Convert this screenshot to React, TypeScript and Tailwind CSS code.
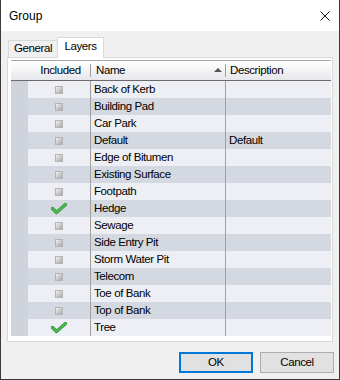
import React from "react";

const rows: { name: string; desc?: string; checked?: boolean }[] = [
  { name: "Back of Kerb" },
  { name: "Building Pad" },
  { name: "Car Park" },
  { name: "Default", desc: "Default" },
  { name: "Edge of Bitumen" },
  { name: "Existing Surface" },
  { name: "Footpath" },
  { name: "Hedge", checked: true },
  { name: "Sewage" },
  { name: "Side Entry Pit" },
  { name: "Storm Water Pit" },
  { name: "Telecom" },
  { name: "Toe of Bank" },
  { name: "Top of Bank" },
  { name: "Tree", checked: true },
];

function Check() {
  return (
    <svg width="16" height="12" viewBox="0 0 16 12">
      <path d="M1.5 5.5 L5.5 9.5 L14.5 1.5" fill="none" stroke="#2f8f35" strokeWidth="3.2" strokeLinecap="round" strokeLinejoin="round" />
      <path d="M1.5 5.5 L5.5 9.5 L14.5 1.5" fill="none" stroke="#4cbb4f" strokeWidth="1.8" strokeLinecap="round" strokeLinejoin="round" />
    </svg>
  );
}

function Box() {
  return <div className="w-[8px] h-[8px] border border-[#b4b4b4] bg-gradient-to-br from-[#f0f0f0] to-[#a9a9a9]" />;
}

export default function App() {
  return (
    <div className="w-[340px] h-[380px] bg-[#f0f0f0] border-x border-b border-[#3a3a3a] flex flex-col font-['Liberation_Sans',Arial,sans-serif] text-black">
      <div className="h-[31px] bg-white flex items-center justify-between pl-[8px] pr-[9px] shrink-0">
        <span className="text-[12px]">Group</span>
        <svg width="10" height="10" viewBox="0 0 10 10">
          <path d="M0.5 0.5 L9.5 9.5 M9.5 0.5 L0.5 9.5" stroke="#111" strokeWidth="1" />
        </svg>
      </div>
      <div className="flex flex-col px-[6px] pt-[6px] text-[11.5px] tracking-[-0.4px]">
        <div className="h-[20px] flex items-end pl-[1px]">
          <div className="w-[50px] h-[17px] border border-b-0 border-[#d9d9d9] flex items-center justify-center">General</div>
          <div className="w-[47px] h-[21px] -ml-[1px] -mb-[1px] relative z-10 bg-white border border-b-0 border-[#d9d9d9] flex items-center justify-center pb-[2px]">Layers</div>
        </div>
        <div className="h-[285px] border border-[#d9d9d9] bg-white pl-[3px] pr-[1px] pt-[2px]">
          <div className="flex flex-col">
            <div className="h-[21px] flex border-t border-[#a8a8a8] border-b border-b-[#6a6a6a] bg-gradient-to-b from-white to-[#e6e7eb]">
              <div className="w-[17px]" />
              <div className="w-[63px] flex items-center justify-center relative">
                <span className="pl-[2px]">Included</span>
                <div className="absolute right-0 top-[3px] bottom-[3px] w-px bg-[#a0a0a0]" />
              </div>
              <div className="w-[135px] flex items-center pl-[5px] relative">
                <span>Name</span>
                <svg className="absolute right-[4px] top-[7px]" width="8" height="4" viewBox="0 0 8 4">
                  <path d="M0 4 L4 0 L8 4 Z" fill="#555" />
                </svg>
                <div className="absolute right-0 top-[3px] bottom-[3px] w-px bg-[#a0a0a0]" />
              </div>
              <div className="flex-1 flex items-center pl-[4px]">Description</div>
            </div>
            {rows.map((r, i) => (
              <div key={r.name} className={`h-[17px] flex ${i % 2 === 0 ? "bg-[#eeeff5]" : "bg-[#d4d8e0]"}`}>
                <div className="w-[17px] bg-[#cfd3db]" />
                <div className="w-[63px] flex items-center justify-center border-r border-[#a0a0a0]">
                  {r.checked ? <Check /> : <Box />}
                </div>
                <div className="w-[135px] flex items-center pl-[3px] border-r border-[#a0a0a0]">{r.name}</div>
                <div className="flex-1 flex items-center pl-[3px]">{r.desc ?? ""}</div>
              </div>
            ))}
          </div>
        </div>
        <div className="flex justify-end gap-[7px] mt-[10px] mr-[-1px]">
          <button className="w-[74px] h-[21px] bg-[#e1e1e1] border-2 border-[#0078d7] flex items-center justify-center">OK</button>
          <button className="w-[74px] h-[21px] bg-[#e1e1e1] border border-[#adadad] flex items-center justify-center">Cancel</button>
        </div>
      </div>
    </div>
  );
}
